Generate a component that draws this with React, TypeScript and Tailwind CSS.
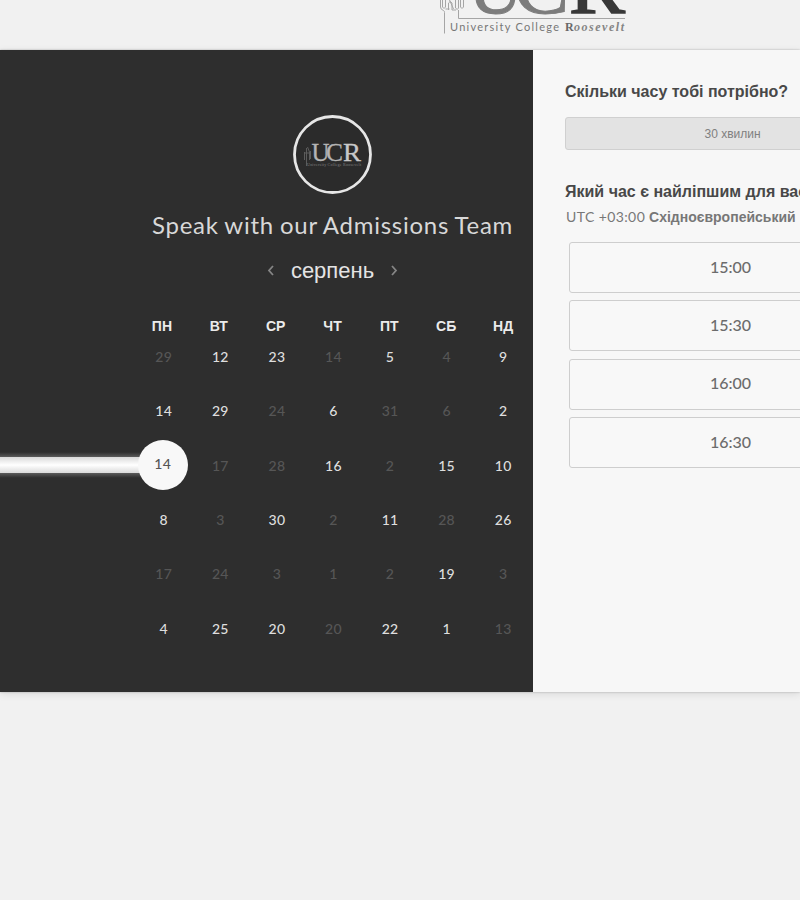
import React from "react";

const sans = "font-['Liberation_Sans',Arial,sans-serif]";
const lato = "font-['Lato','Liberation_Sans',sans-serif]";

const weekdays = ["ПН", "ВТ", "СР", "ЧТ", "ПТ", "СБ", "НД"];

type Day = { n: number; off?: boolean; selected?: boolean };
const on = (n: number): Day => ({ n });
const off = (n: number): Day => ({ n, off: true });

const weeks: Day[][] = [
  [off(29), on(12), on(23), off(14), on(5), off(4), on(9)],
  [on(14), on(29), off(24), on(6), off(31), off(6), on(2)],
  [{ n: 14, selected: true }, off(17), off(28), on(16), off(2), on(15), on(10)],
  [on(8), off(3), on(30), off(2), on(11), off(28), on(26)],
  [off(17), off(24), off(3), off(1), off(2), on(19), off(3)],
  [on(4), on(25), on(20), off(20), on(22), on(1), off(13)],
];

const slots = ["15:00", "15:30", "16:00", "16:30"];

function HeaderLogo() {
  return (
    <svg width="200" height="50" viewBox="435 0 200 50" className="block">
      <g fontFamily="'Liberation Serif', serif">
        <text x="468" y="13" fontSize="76" fill="#7c7c7c" stroke="#7c7c7c" strokeWidth="1" textLength="55" lengthAdjust="spacingAndGlyphs">U</text>
        <text x="514" y="13" fontSize="76" fill="#7c7c7c" stroke="#7c7c7c" strokeWidth="1" textLength="55" lengthAdjust="spacingAndGlyphs">C</text>
        <text x="569" y="13" fontSize="76" fill="#383838" stroke="#383838" strokeWidth="1.500" textLength="56" lengthAdjust="spacingAndGlyphs">R</text>
      </g>
      <g fill="none" stroke="#a5a5a5" strokeWidth="1">
        <path d="M440.500 0v7q0 2.500 3 3.500q1 .5 1 2V33.500M442.500 0v7q1.500 3 3 0V0M448.500 10V3q1.500-3 3.500 0v7M445.500 9h4M449.500 0l4 9M455.500 0v8q2 3 3 0V0M460.500 0v7q1.500 3 3 0V0M452 10h4" />
        <path d="M458.500 10v8.500H625" />
      </g>
      <text x="450" y="31" fontFamily="Lato, sans-serif" fontSize="11" fill="#777" textLength="109" lengthAdjust="spacing">University College</text>
      <text x="565" y="31" fontFamily="'Liberation Serif', serif" fontSize="12" fontWeight="bold" fill="#686868">R</text>
      <text x="574" y="31" fontFamily="'Liberation Serif', serif" fontSize="12" fontStyle="italic" fontWeight="bold" fill="#858585" textLength="50" lengthAdjust="spacing">oosevelt</text>
    </svg>
  );
}

function RoundLogo() {
  return (
    <svg width="80" height="80" viewBox="0 0 80 80" className="block">
      <circle cx="39.500" cy="39.500" r="38" fill="#2b2b2b" stroke="#e6e6e6" strokeWidth="2.800" />
      <g fontFamily="'Liberation Serif', serif" fontSize="25" strokeWidth="0.300">
        <text x="18.500" y="46" fill="#b4b4b4" stroke="#b4b4b4" textLength="18" lengthAdjust="spacingAndGlyphs">U</text>
        <text x="33" y="46" fill="#b4b4b4" stroke="#b4b4b4" textLength="17" lengthAdjust="spacingAndGlyphs">C</text>
        <text x="50" y="46" fill="#c8c8c8" stroke="#c8c8c8" textLength="18" lengthAdjust="spacingAndGlyphs">R</text>
      </g>
      <path d="M11.500 45v-8M13.500 45V33M14.500 32l2 5v8M17.500 44v-8M11 38h7M13.500 45v6" fill="none" stroke="#5c5c5c" strokeWidth="1" />
      <text x="14" y="51" fontFamily="'Liberation Serif', serif" fontSize="4" fill="#828282" textLength="54" lengthAdjust="spacing">University College Roosevelt</text>
    </svg>
  );
}

function Chevron({ right = false }: { right?: boolean }) {
  return (
    <svg width="8" height="12" viewBox="0 0 8 12" className="block" fill="none" stroke="#858585" strokeWidth="1.800">
      <path d={right ? "M2 2 6 6.500l-4 4.500" : "M6 2 2 6.500l4 4.500"} />
    </svg>
  );
}

function DayCell({ day }: { day: Day }) {
  if (day.selected) {
    return (
      <div className="relative flex h-[54.3px] items-center justify-center">
        <div className="absolute top-[13px] right-[50px] h-[26px] w-[200px] bg-linear-to-b from-[#2d2d2d] from-0% via-[#b0b0b0] via-50% to-[#2d2d2d] to-100%">
          <div className="mt-[5px] h-[16px] bg-linear-to-b from-[#dadada] via-white to-[#dadada]" />
        </div>
        <div className="relative -top-[1px] flex h-[50px] w-[50px] shrink-0 items-center justify-center rounded-full bg-[#f8f8f8] pb-[2px] text-[#555]">
          {day.n}
        </div>
      </div>
    );
  }
  return (
    <div className={`flex h-[54.3px] items-center justify-center pl-[2px] ${day.off ? "text-[#565656]" : "text-[#dedede]"}`}>
      {day.n}
    </div>
  );
}

export default function App() {
  return (
    <div className={`flex h-[900px] w-[800px] flex-col overflow-hidden bg-[#f1f1f1] ${sans}`}>
      <header className="h-[50px] shrink-0 pl-[435px]">
        <HeaderLogo />
      </header>

      <main className="flex h-[641.5px] shrink-0 bg-[#f7f7f7] shadow-[0_0_2px_rgba(0,0,0,0.25),0_2px_8px_rgba(0,0,0,0.1)]">
        <section className="flex w-[532.5px] shrink-0 flex-col overflow-hidden bg-[#2e2e2e] pl-[133.5px]">
          <div className="mt-[65px] flex w-[398px] justify-center">
            <RoundLogo />
          </div>
          <h1 className={`mt-[14px] h-[32px] w-[398px] text-center text-[24px] leading-[32px] whitespace-nowrap text-[#d8d8d8] ${lato}`}>
            <span className="tracking-[0.75px] [word-spacing:-0.8px]">Speak with our Admissions Team</span>
          </h1>
          <div className="mt-[14px] flex h-[30px] w-[398px] items-center justify-center gap-[16px] text-[22px] text-[#e4e4e4]">
            <Chevron />
            <span>серпень</span>
            <Chevron right />
          </div>
          <div className="mt-[31px] grid h-[20px] w-[398px] grid-cols-7 text-center text-[14px] leading-[20px] font-bold text-[#ebebeb]">
            {weekdays.map((d) => (
              <div key={d}>{d}</div>
            ))}
          </div>
          <div className={`-mt-[6px] ml-[1px] grid w-[396px] grid-cols-7 text-[14px] leading-[20px] font-medium tracking-[0.3px] ${lato}`}>
            {weeks.flatMap((week, r) => week.map((day, c) => <DayCell key={`${r}-${c}`} day={day} />))}
          </div>
        </section>

        <section className="flex min-w-0 flex-1 flex-col overflow-hidden pl-[32.5px] whitespace-nowrap">
          <h2 className="mt-[31px] text-[16px] leading-[22px] font-bold text-[#484848]">Скільки часу тобі потрібно?</h2>
          <div className="mt-[14px] flex h-[33px] w-[335px] shrink-0 items-center justify-center rounded-[3px] border border-[#d0d0d0] bg-[#e3e3e3] text-[12px] text-[#808080]">
            30 хвилин
          </div>
          <h2 className="mt-[31px] text-[16px] leading-[22px] font-bold text-[#484848]">Який час є найліпшим для вас?</h2>
          <p className="mt-[4px] pl-[1px] text-[14px] leading-[20px] text-[#777]">
            <span className={`tracking-[0.4px] ${lato}`}>UTC +03:00</span> <b>Східноєвропейський</b>
          </p>
          <div className="mt-[15px] flex flex-col gap-[7.4px] pl-[4px]">
            {slots.map((s) => (
              <div
                key={s}
                className={`flex h-[51px] w-[323px] shrink-0 items-center justify-center rounded-[3px] border border-[#cecece] bg-[#f8f8f8] pb-[2px] text-[16px] font-medium text-[#6c6c6c] ${lato}`}
              >
                {s}
              </div>
            ))}
          </div>
        </section>
      </main>
    </div>
  );
}
